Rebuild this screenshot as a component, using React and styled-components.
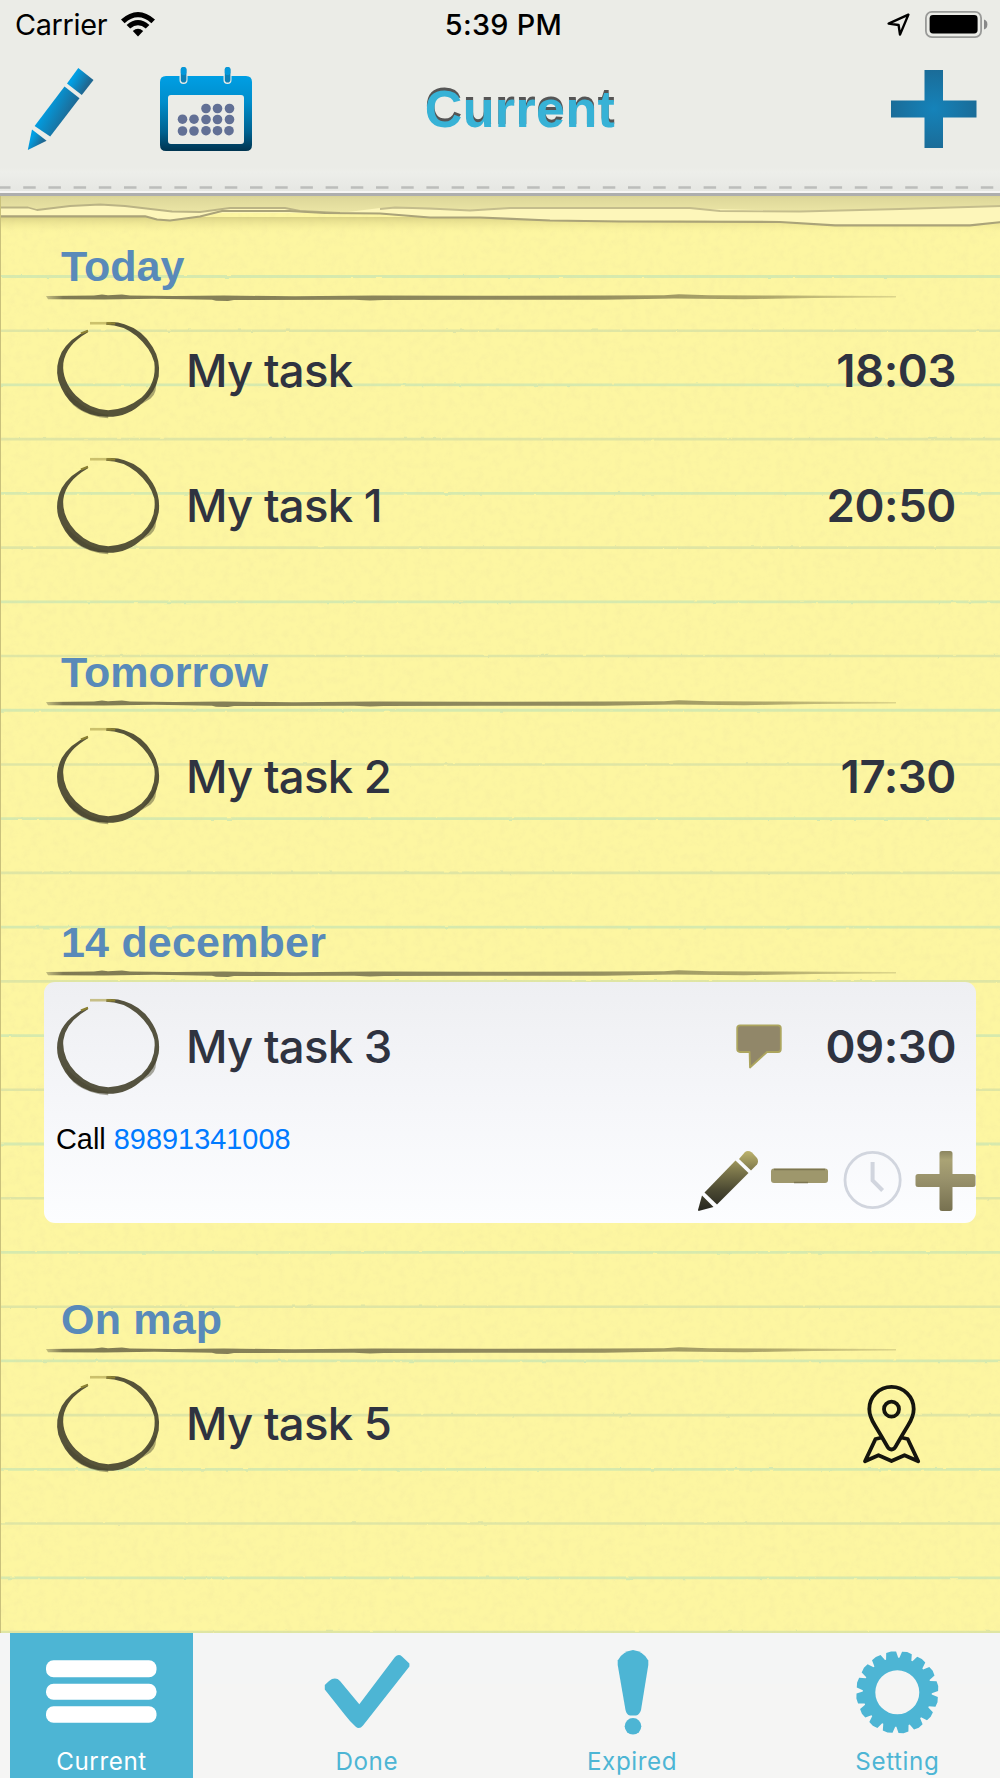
import React, { useState } from "react";
import styled, { createGlobalStyle } from "styled-components";

const GlobalStyle = createGlobalStyle`
  * {
    box-sizing: border-box;
  }

  body {
    margin: 0;
    font-family: Inter, "Liberation Sans", sans-serif;
  }

  svg {
    display: block;
    flex-shrink: 0;
  }
`;

const Screen = styled.div`
  display: flex;
  flex-direction: column;
  width: 1000px;
  height: 1778px;
  overflow: hidden;
`;

const TopBar = styled.header`
  height: 196px;
  flex-shrink: 0;
  background: linear-gradient(#ebece7 0, #ebece7 168px, #edeeea 172px, #e6e7e3 191px);
  border-bottom: 3px solid #adaeae;
  box-shadow: inset 0 -2px 0 #f6f6f5;
`;

const StatusBar = styled.div`
  display: grid;
  grid-template-columns: 1fr auto 1fr;
  align-items: center;
  height: 52px;
  padding: 0 12px 3px 15px;
  font-size: 28.8px;
  color: #000;
`;

const Carrier = styled.div`
  display: flex;
  align-items: center;
  gap: 14px;
  letter-spacing: -0.3px;
`;

const Clock = styled.div`
  font-weight: 500;
  letter-spacing: 0.3px;
  margin-left: 4px;
`;

const StatusIcons = styled.div`
  display: flex;
  align-items: center;
  justify-content: flex-end;
  gap: 15px;
`;

const NavBar = styled.div`
  display: grid;
  grid-template-columns: 1fr auto 1fr;
  align-items: center;
  height: 124px;
  padding: 0 23px 10px 27px;
`;

const NavLeft = styled.div`
  display: flex;
  align-items: center;
  gap: 65px;
`;

const NavRight = styled.div`
  display: flex;
  justify-content: flex-end;
`;

const Title = styled.h1`
  margin: 0 0 1px 36px;
  font: bold 52px "Liberation Sans", Arial, sans-serif;
  letter-spacing: 0.4px;
  color: #37b2d6;
  text-shadow: 0 -3px 0 #555;
`;

const Stitches = styled.svg`
  margin-top: 8px;
`;

const Paper = styled.main`
  position: relative;
  flex: 1;
  padding-top: 34px;
  background: #fdf6a1;
  border-left: 1px solid #c9c17c;
`;

const PaperDrawing = styled.svg`
  position: absolute;
  left: 0;
  top: 0;
`;

const List = styled.div`
  position: relative;
  display: flex;
  flex-direction: column;
  gap: 60px;
  padding: 0 24px 0 43px;
`;

const SectionHead = styled.div`
  height: 75.3px;
  padding-top: 12px;
`;

const SectionTitle = styled.h2`
  margin: 0 0 0 17px;
  font: bold 43px/48px "Liberation Sans", Arial, sans-serif;
  letter-spacing: ${(props) => props.$spacing || "0"};
  color: #598ab9;
`;

const Card = styled.div`
  ${(props) =>
    props.$open &&
    `
    height: 241.3px;
    border-radius: 11px;
    background: linear-gradient(#eeeff2, #f6f7fa 55%, #fcfdff);
  `}
`;

const TaskRow = styled.div`
  display: flex;
  align-items: center;
  height: 135.3px;
  padding: 0 20px 5px 12px;
  font-size: 45.5px;
  color: #2f3340;
`;

const TaskName = styled.div`
  flex: 1;
  margin-left: 26px;
  font-weight: 500;
  letter-spacing: -0.75px;
`;

const TaskTime = styled.div`
  margin-left: 43px;
  font-weight: 600;
  letter-spacing: -0.4px;
`;

const PinHolder = styled.div`
  padding-right: 34px;
`;

const Details = styled.div`
  display: flex;
  justify-content: space-between;
  padding-left: 12px;
`;

const Note = styled.p`
  margin: 5px 0 0;
  font: 28.9px/34px "Liberation Sans", Arial, sans-serif;
  color: #000;

  a {
    color: #007aff;
    text-decoration: none;
  }
`;

const Actions = styled.div`
  display: flex;
  gap: 12.3px;
  margin-top: 34px;
`;

const TabBar = styled.nav`
  display: flex;
  gap: 82.3px;
  height: 145px;
  flex-shrink: 0;
  padding-left: 10px;
  background: linear-gradient(#f4f5f5 51px, #f5f5f4 51px);
`;

const Tab = styled.button`
  display: flex;
  flex-direction: column;
  align-items: center;
  gap: 12px;
  width: 183px;
  padding: 12px 0 0;
  border: 0;
  font: 400 24.2px/30px Inter, sans-serif;
  letter-spacing: 0.6px;
  color: ${(props) => (props.$active ? "#fff" : "#4db5d4")};
  background: ${(props) => (props.$active ? "#4db5d4" : "transparent")};
`;

const WifiIcon = () => (
  <svg width="34" height="25" viewBox="0 0 34 25">
    <path d="M0 7.6 Q17 -7.6 34 7.6 L30.4 11.2 Q17 -0.6 3.6 11.2 Z" />
    <path d="M5.6 13 Q17 3 28.4 13 L24.8 16.4 Q17 10 9.2 16.4 Z" />
    <path d="M11.8 19 Q17 14.6 22.2 19 L17 24.4 Z" />
  </svg>
);

const LocationIcon = () => (
  <svg width="24" height="24" viewBox="0 0 24 24" fill="none" stroke="#000" strokeWidth="2.4" strokeLinejoin="round">
    <path d="M22.4 1.6 L2.6 10.6 L12.6 12 L14 21.6 Z" />
  </svg>
);

const BatteryIcon = () => (
  <svg width="63" height="27" viewBox="0 0 63 27">
    <rect x="0.9" y="0.9" width="55.2" height="25.2" rx="6" fill="none" stroke="#999a98" strokeWidth="1.8" />
    <rect x="4.6" y="4" width="48" height="18.4" rx="3.4" />
    <path d="M59 8.6 Q62.4 9.6 62.4 13.4 Q62.4 17.2 59 18.4 Z" fill="#888" />
  </svg>
);

const EditIcon = () => (
  <svg width="68" height="84" viewBox="0 0 68 84">
    <defs>
      <linearGradient id="edit" x1="0.25" y1="0.35" x2="0.75" y2="0.65">
        <stop offset="0" stopColor="#009fe4" />
        <stop offset="1" stopColor="#1f6892" />
      </linearGradient>
    </defs>
    <g fill="url(#edit)">
      <path d="M51.3 1 L66.5 13 L54.8 28 L40 16.5 Z" />
      <path d="M37.5 19.5 L52.5 31.3 L23.2 69.6 L7.6 59 Z" />
      <path d="M5 62.5 L19.6 73.8 L0.8 83 Z" />
    </g>
  </svg>
);

const calendarDots = [
  [46, 41.5], [57.5, 41.5], [69.5, 41.5],
  [22.5, 52.2], [34, 52.2], [46, 52.5], [57.5, 52.5], [69.5, 52.5],
  [22.5, 64], [34, 64], [46, 63.7], [57.5, 63.7], [69, 63.7],
];

const CalendarIcon = () => (
  <svg width="92" height="84" viewBox="0 0 92 84">
    <defs>
      <linearGradient id="cal" x1="0" y1="0" x2="0" y2="1">
        <stop offset="0" stopColor="#009fe4" />
        <stop offset="0.35" stopColor="#008dcb" />
        <stop offset="0.75" stopColor="#00618f" />
        <stop offset="1" stopColor="#003450" />
      </linearGradient>
    </defs>
    <path
      fill="url(#cal)"
      fillRule="evenodd"
      d="M6 9 H86 Q92 9 92 15 V78 Q92 84 86 84 H6 Q0 84 0 78 V15 Q0 9 6 9 Z M11 28 Q8 28 8 31 V74 Q8 77 11 77 H81 Q84 77 84 74 V31 Q84 28 81 28 Z"
    />
    {[20.5, 64.5].map((x) => (
      <g key={x}>
        <rect x={x - 1} y="0" width="8" height="17" rx="4" fill="#ebece7" />
        <rect x={x + 0.3} y="0" width="5.6" height="15.5" rx="2.8" fill="#0d80b6" />
        <rect x={x + 0.3} y="0" width="5.6" height="8" rx="2.8" fill="#0598da" />
      </g>
    ))}
    {calendarDots.map(([x, y]) => (
      <circle key={`${x}_${y}`} cx={x} cy={y} r="4.8" fill="#627095" />
    ))}
  </svg>
);

const AddIcon = () => (
  <svg width="86" height="79" viewBox="0 0 86 79">
    <defs>
      <radialGradient id="add" cx="0.5" cy="0.5" r="0.55">
        <stop offset="0" stopColor="#1583ba" />
        <stop offset="1" stopColor="#1b6a95" />
      </radialGradient>
    </defs>
    <path fill="url(#add)" d="M33.5 0 H52 V30.5 H85.5 V47.4 H52 V78 H33.5 V47.4 H0 V30.5 H33.5 Z" />
  </svg>
);

// Ruled lines, grain and the torn strip along the top of the pad
const PaperBackground = () => (
  <PaperDrawing width="999" height="1437" viewBox="1 196 999 1437">
    <defs>
      <filter id="grain" x="0" y="0" width="100%" height="100%">
        <feTurbulence type="fractalNoise" baseFrequency="0.13" numOctaves="3" seed="4" />
        <feColorMatrix values="0 0 0 0 0.8  0 0 0 0 0.72  0 0 0 0 0.35  0.9 0 0 0 -0.36" />
      </filter>
      <filter id="rough" filterUnits="userSpaceOnUse" x="0" y="196" width="1000" height="1440">
        <feTurbulence type="fractalNoise" baseFrequency="0.12" numOctaves="2" seed="9" />
        <feDisplacementMap in="SourceGraphic" scale="2" xChannelSelector="R" yChannelSelector="G" />
        <feGaussianBlur stdDeviation="0.5" />
      </filter>
      <filter id="soft">
        <feGaussianBlur stdDeviation="0.6" />
      </filter>
      <linearGradient id="topShade" x1="0" y1="0" x2="0" y2="1">
        <stop offset="0" stopColor="#c9c38d" />
        <stop offset="0.35" stopColor="#ded89a" />
        <stop offset="1" stopColor="#ece6a6" />
      </linearGradient>
      <linearGradient id="underShade" x1="0" y1="0" x2="0" y2="1">
        <stop offset="0" stopColor="#b9b06a" stopOpacity="0.5" />
        <stop offset="1" stopColor="#f0e893" stopOpacity="0" />
      </linearGradient>
    </defs>
    <g filter="url(#rough)">
      {Array.from({ length: 26 }, (_, i) => (
        <path
          key={i}
          d={`M0 ${276.5 + i * 54.22} H1000`}
          stroke={i % 2 ? "#dfe6a4" : "#d6eaae"}
          strokeWidth={i % 2 ? 2.6 : 2.8}
        />
      ))}
    </g>
    <rect x="0" y="196" width="1000" height="1437" filter="url(#grain)" opacity="0.42" />
    <rect x="0" y="217" width="1000" height="16" fill="url(#underShade)" />
    <g filter="url(#soft)">
      <path
        fill="#fdf6ba"
        d="M-5 200 H1005 V222 Q985 225 970 225 H835 Q800 222 680 220.5 Q600 221 550 220 L480 217.5 L430 217.5 L380 213.5 L340 213 L220 213 L200 216.5 Q185 219 170 220 L157 219.5 L145 216.5 H-5 Z"
      />
      <path
        fill="url(#topShade)"
        d="M-5 190 H1005 V206 L900 209 L800 211 L690 208.5 L510 208 L470 210.5 L380 208 L340 213 L300 211 L285 208 L230 208 L200 211 H172 L125 206 L100 204.5 L70 206 L37 210 L28 207.5 H-5 Z"
      />
      <g fill="none" strokeWidth="1.8" strokeLinejoin="round">
        <path stroke="#bab385" d="M-2 207.5 H28 L37 210 L70 206 L100 204.5 L125 206 L172 211.5 L200 212 L230 208 H285 L300 211 L340 213" />
        <path stroke="#c4bd8d" d="M380 209 L395 207.5 L430 208.5 L470 210.5 L510 208 H690 L720 211 L800 211.5 L900 209 L1002 206" />
        <path
          stroke="#aaa379"
          strokeWidth="2.2"
          d="M-2 216.3 H145 L157 219.5 L170 220.5 L200 216.5 L222 211 L290 211 L325 213 L380 213.5 L430 217.5 H480 L550 220.5 L620 221.5 L780 222 L835 225.3 H970 L1002 222"
        />
      </g>
    </g>
  </PaperDrawing>
);

const Underline = () => (
  <svg width="856" height="14" viewBox="0 0 856 14">
    <defs>
      <linearGradient id="under" x1="0" y1="0" x2="1" y2="0">
        <stop offset="0" stopColor="#605c40" stopOpacity="0.35" />
        <stop offset="0.02" stopColor="#605c40" stopOpacity="0.8" />
        <stop offset="0.6" stopColor="#6c6747" stopOpacity="0.75" />
        <stop offset="0.85" stopColor="#857e4e" stopOpacity="0.65" />
        <stop offset="1" stopColor="#a29b63" stopOpacity="0.35" />
      </linearGradient>
      <filter id="pen" x="-1%" y="-30%" width="102%" height="160%">
        <feGaussianBlur stdDeviation="0.7" />
      </filter>
    </defs>
    <path
      fill="url(#under)"
      filter="url(#pen)"
      d="M2 6 L50 5.4 L58 4.6 L64 5.2 L78 4.4 L86 5.4 L130 6 L180 5.6 L250 6.2 L330 5.6 L440 5.8 L560 5.6 L620 5.2 L635 4.2 L650 4.8 L665 5.2 L740 5.6 L852 6 L852 7.6 L770 8 L700 9.2 L630 8.6 L560 9.8 L440 9.8 L340 10 L326 10.6 L310 9.8 L190 10 L184 11 L172 10.8 L168 9.8 L110 8.8 L60 9.4 L4 9.2 Z"
    />
  </svg>
);

const CircleSketch = () => (
  <svg width="104" height="98" viewBox="1 1.2 101.6 97">
    <g filter="url(#ink)">
      <filter id="ink" x="-5%" y="-5%" width="110%" height="110%">
        <feGaussianBlur stdDeviation="0.6" />
      </filter>
      <path
        fill="#48442f"
        fillOpacity="0.92"
        d="M32 10 Q14 18 6 32 Q-1 46 2.6 60 Q8 76 18 84 Q32 96 52 96 Q72 96 86 82 Q99 72 102 56 Q104 40 96 27 Q86 10 68 4.5 Q60 1.5 50 2.5 L50 5 Q66 5 80 16 Q94 28 97.6 42 Q100.4 62 85 77 Q70 89 52 89.5 Q34 89 20 75 Q6 60 7.6 43 Q10 25 32 12.4 Z"
      />
      <path fill="#48442f" fillOpacity="0.45" d="M10 70 Q12 82 22 88 Q34 96 52 97.5 L52 94 Q30 92 10 70 Z M99 60 Q101 72 94 78 L84 84 Z" />
      <path stroke="#b1a44f" strokeOpacity="0.65" strokeWidth="2.6" d="M34 3.4 H55" />
      <path stroke="#8d8233" strokeWidth="2.2" d="M51 3.6 H59 M25 13.5 L32 10.8" />
    </g>
  </svg>
);

const CommentIcon = () => (
  <svg width="46" height="46" viewBox="0 0 46 46">
    <path
      fill="#918769"
      stroke="#aca55e"
      strokeWidth="1.8"
      strokeLinejoin="round"
      d="M4 1.4 H42 Q44.8 1.4 44.8 4 V25 Q44.8 28 42 28 H31 L14 43.5 L13.6 28 H4 Q1.2 28 1.2 25 V4 Q1.2 1.4 4 1.4 Z"
    />
  </svg>
);

const PinIcon = () => (
  <svg width="60" height="80" viewBox="0 0 60 80" fill="none" stroke="#15150e" strokeWidth="3.8" strokeLinejoin="round">
    <path d="M29.5 65.5 Q26.5 65.5 24.5 61 Q18.5 50.5 13 41.5 Q7.3 32.5 7.3 25 A22.2 22.2 0 0 1 51.7 25 Q51.7 32.5 46 41.5 Q40.5 50.5 34.5 61 Q32.5 65.5 29.5 65.5 Z" />
    <circle cx="29.5" cy="25.2" r="7.5" />
    <path d="M20 53.5 L13.5 55 L3 77.3 L16.5 71.2 L29.5 77 L42.5 71.2 L56.2 77.3 L45.7 55 L39 53.5" />
  </svg>
);

const PencilIcon = () => (
  <svg width="60" height="60" viewBox="0 0 60 60">
    <defs>
      <linearGradient id="pencil" gradientUnits="userSpaceOnUse" x1="0" y1="0" x2="0" y2="60">
        <stop offset="0" stopColor="#bdb36d" />
        <stop offset="0.3" stopColor="#827c4e" />
        <stop offset="0.65" stopColor="#4b4932" />
        <stop offset="1" stopColor="#26261f" />
      </linearGradient>
    </defs>
    <g fill="url(#pencil)">
      <path d="M41 8 L47 1 Q50 -1 54 1.5 L59 7 Q61 10 59 13.5 L53 19.5 Z" />
      <path d="M37.5 9.5 L50.5 22 L19 53.5 L6.5 41.5 Z" />
      <path d="M4 44.5 L15.5 56 L0.5 60 L0 59 Z" />
    </g>
  </svg>
);

const MinusIcon = () => (
  <svg width="60" height="60" viewBox="0 0 60 60">
    <rect x="1" y="17.5" width="57" height="14.5" rx="3" fill="#9e976c" />
    <path d="M4 18.5 H55 M24 31.5 H38" stroke="#7d7651" strokeWidth="1.6" />
  </svg>
);

const ClockIcon = () => (
  <svg width="60" height="60" viewBox="0 0 60 60" fill="none" stroke="#d1d5de">
    <circle cx="29.6" cy="29" r="27.6" strokeWidth="2.8" />
    <path d="M29.6 11 V29.5 L39.6 39.5" strokeWidth="4" />
  </svg>
);

const PlusIcon = () => (
  <svg width="61" height="60" viewBox="0 0 61 60">
    <defs>
      <linearGradient id="plus" x1="0" y1="0" x2="0" y2="1">
        <stop offset="0" stopColor="#8b855f" />
        <stop offset="0.15" stopColor="#aaa375" />
        <stop offset="0.5" stopColor="#97906a" />
        <stop offset="1" stopColor="#777150" />
      </linearGradient>
    </defs>
    <path
      fill="url(#plus)"
      d="M27 0 H35 Q37.5 0 37.5 2.5 V23 H58 Q60.5 23 60.5 25.5 V33.5 Q60.5 36 58 36 H37.5 V57.5 Q37.5 60 35 60 H27 Q24.5 60 24.5 57.5 V36 H3 Q0.5 36 0.5 33.5 V25.5 Q0.5 23 3 23 H24.5 V2.5 Q24.5 0 27 0 Z"
    />
  </svg>
);

const ListTabIcon = () => (
  <svg width="112" height="90" viewBox="1 0 112 90" fill="#fff">
    <rect x="1" y="15.2" width="110.5" height="17" rx="7.5" />
    <rect x="1" y="38.7" width="110.5" height="16" rx="7.5" />
    <rect x="1" y="61.2" width="110.5" height="16.6" rx="7.5" />
  </svg>
);

const DoneTabIcon = () => (
  <svg width="112" height="90" viewBox="0 0 112 90" fill="#4db5d4">
    <path d="M13.8 40 Q18 35.5 21 34 Q26 32.5 29 36 L48.3 59.2 L84 12 Q87.5 8.5 91 11.5 L98.4 18.5 L98.4 21.5 L52 80.5 Q48.3 85 44.5 81.5 Q38.5 76 34 70 L13.8 44.5 Z" />
  </svg>
);

const ExpiredTabIcon = () => (
  <svg width="112" height="90" viewBox="0 0 112 90" fill="#4db5d4">
    <path d="M57 5 Q68 6.5 72.3 15.5 L72.3 20 L65 65 Q63.5 70 60 70.4 H54 Q50.5 70 49.5 65 L41.7 20 V15.5 Q46 6.5 57 5 Z" />
    <circle cx="57" cy="81.3" r="8.3" />
  </svg>
);

const GearTabIcon = () => {
  const teeth = 16;
  const points = [];
  const add = (deg, r) => {
    const a = ((deg - 90) * Math.PI) / 180;
    points.push(`${(56.3 + r * Math.cos(a)).toFixed(2)},${(47.3 + r * Math.sin(a)).toFixed(2)}`);
  };
  for (let i = 0; i < teeth; i++) {
    const notch = 2.5 + (i * 360) / teeth;
    add(notch - 1, 34.5);
    add(notch + 1, 34.5);
    add(notch + 4.2, 40.8);
    add(notch + 11.3, 41.4);
    add(notch + 18.3, 40.8);
  }
  return (
    <svg width="112" height="90" viewBox="0 0 112 90">
      <path fill="#4db5d4" fillRule="evenodd" d={`M${points.join("L")}Z M34.3 47.3 a22 22 0 1 0 44 0 a22 22 0 1 0 -44 0 Z`} />
    </svg>
  );
};

const sections = [
  {
    title: "Today",
    tasks: [
      { name: "My task", time: "18:03" },
      { name: "My task 1", time: "20:50" },
    ],
  },
  { title: "Tomorrow", tasks: [{ name: "My task 2", time: "17:30" }] },
  {
    title: "14 december",
    spacing: "0.2px",
    tasks: [{ name: "My task 3", time: "09:30", phone: "89891341008" }],
  },
  { title: "On map", spacing: "0.2px", tasks: [{ name: "My task 5", onMap: true }] },
];

const tabs = [
  { label: "Current", Icon: ListTabIcon },
  { label: "Done", Icon: DoneTabIcon },
  { label: "Expired", Icon: ExpiredTabIcon },
  { label: "Setting", Icon: GearTabIcon },
];

const Task = ({ name, time, phone, onMap }) => (
  <Card $open={!!phone}>
    <TaskRow>
      <CircleSketch />
      <TaskName>{name}</TaskName>
      {phone && <CommentIcon />}
      {time && <TaskTime>{time}</TaskTime>}
      {onMap && (
        <PinHolder>
          <PinIcon />
        </PinHolder>
      )}
    </TaskRow>
    {phone && (
      <Details>
        <Note>
          Call <a href={`tel:${phone}`}>{phone}</a>
        </Note>
        <Actions>
          <PencilIcon />
          <MinusIcon />
          <ClockIcon />
          <PlusIcon />
        </Actions>
      </Details>
    )}
  </Card>
);

const App = () => {
  const [active, setActive] = useState("Current");

  return (
    <Screen>
      <GlobalStyle />
      <TopBar>
        <StatusBar>
          <Carrier>
            Carrier
            <WifiIcon />
          </Carrier>
          <Clock>5:39 PM</Clock>
          <StatusIcons>
            <LocationIcon />
            <BatteryIcon />
          </StatusIcons>
        </StatusBar>
        <NavBar>
          <NavLeft>
            <EditIcon />
            <CalendarIcon />
          </NavLeft>
          <Title>{active}</Title>
          <NavRight>
            <AddIcon />
          </NavRight>
        </NavBar>
        <Stitches width="1000" height="6" viewBox="0 0 1000 6">
          <path d="M-2 3.5 H1000" stroke="#bcbdbb" strokeWidth="2.6" strokeDasharray="12.5 12.7" />
        </Stitches>
      </TopBar>
      <Paper>
        <PaperBackground />
        <List>
          {sections.map((s) => (
            <section key={s.title}>
              <SectionHead>
                <SectionTitle $spacing={s.spacing}>{s.title}</SectionTitle>
                <Underline />
              </SectionHead>
              {s.tasks.map((t) => (
                <Task key={t.name} {...t} />
              ))}
            </section>
          ))}
        </List>
      </Paper>
      <TabBar>
        {tabs.map(({ label, Icon }) => (
          <Tab key={label} $active={label === active} onClick={() => setActive(label)}>
            <Icon />
            {label}
          </Tab>
        ))}
      </TabBar>
    </Screen>
  );
};

export default App;
